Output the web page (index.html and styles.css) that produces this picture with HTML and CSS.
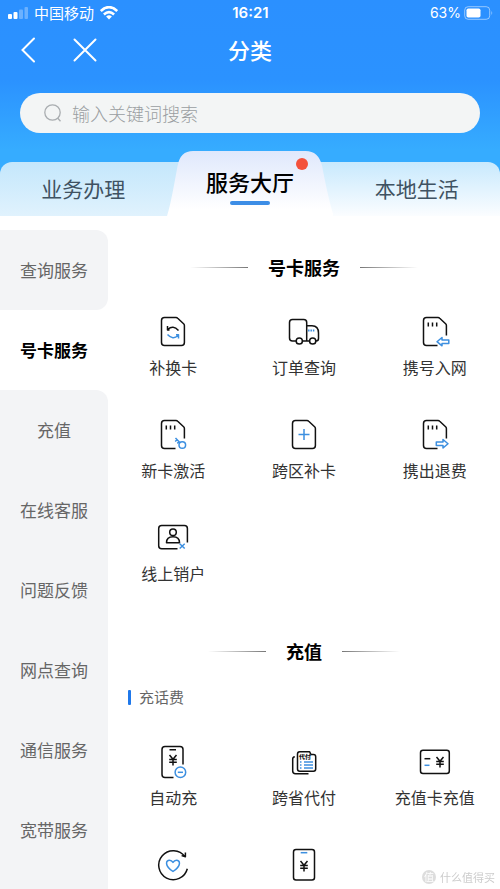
FILE: index.html
```html
<!DOCTYPE html>
<html lang="zh-CN">
<head>
<meta charset="utf-8">
<meta name="viewport" content="width=device-width, initial-scale=1">
<title>分类</title>
<link rel="stylesheet" href="styles.css">
</head>
<body>
<svg class="defs" aria-hidden="true">
  <defs>
    <symbol id="yen" viewBox="0 0 10 12"><path d="M1.5 1 5 5.200 8.500 1M5 5.200V11.500M1.200 5.400H8.800M1.200 8.300H8.800"/></symbol>
    <symbol id="sim-open" viewBox="0 0 36 36"><path d="M20.500 31.500H9.500Q6.500 31.500 6.500 28.500V6.500Q6.500 3.500 9.500 3.500H21Q22 3.500 22.700 4.200L28.600 9.800Q29.400 10.600 29.400 11.600V21.500"/><path d="M11.300 8.500V12.500M15.500 8.500V12.500M19.700 8.500V12.500"/></symbol>
    <symbol id="sim" viewBox="0 0 36 36"><path d="M9.500 3.500H21Q22 3.500 22.700 4.200L28.600 9.800Q29.400 10.600 29.400 11.600V28.500Q29.400 31.500 26.400 31.500H9.500Q6.500 31.500 6.500 28.500V6.500Q6.500 3.500 9.500 3.500Z"/></symbol>
  </defs>
</svg>

<header class="header">
  <div class="status">
    <div class="status-left">
      <svg width="20" height="12" viewBox="0 0 20 12" fill="#fff" aria-hidden="true"><rect y="7" width="4" height="5" rx="1"/><rect x="5.500" y="5" width="4" height="7" rx="1"/><rect x="11" y="2.500" width="4" height="9.500" rx="1" opacity=".3"/><rect x="16.500" width="3.500" height="12" rx="1" opacity=".3"/></svg>
      <span>中国移动</span>
      <svg width="18" height="14" viewBox="0 0 18 14" aria-hidden="true"><g fill="none" stroke="#fff" stroke-width="2.600"><path d="M.8 5Q9-2.700 17.200 5"/><path d="M3.900 8.500Q9 3.900 14.100 8.500"/></g><path d="M6.100 10.400Q9 8 11.900 10.400L9 13.600Z" fill="#fff"/></svg>
    </div>
    <time class="clock">16:21</time>
    <div class="status-right">
      <span>63%</span>
      <svg width="29" height="14" viewBox="0 0 29 14" aria-hidden="true"><rect x=".7" y=".7" width="25" height="12.600" rx="3.500" fill="none" stroke="#fff" opacity=".5"/><rect x="2.500" y="2.500" width="14" height="9" rx="1.800" fill="#fff"/><path d="M27.500 4.800Q29 7 27.500 9.200Z" fill="#fff" opacity=".6"/></svg>
    </div>
  </div>

  <div class="titlebar">
    <div class="nav">
      <button type="button" aria-label="返回"><svg width="16" height="26" viewBox="0 0 16 26"><path d="M14 1.500 2.500 13 14 24.500"/></svg></button>
      <button type="button" aria-label="关闭"><svg width="24" height="24" viewBox="0 0 24 24"><path d="M1.500 1.500 22.500 22.500M22.500 1.500 1.500 22.500"/></svg></button>
    </div>
    <h1>分类</h1>
  </div>

  <label class="search">
    <svg width="18" height="18" viewBox="0 0 18 18" fill="none" stroke="#a9adb0" stroke-width="1.300" aria-hidden="true"><circle cx="8.500" cy="8.500" r="7.700"/><path d="M13.800 14.200 16.500 17.200"/></svg>
    <input type="search" placeholder="输入关键词搜索" aria-label="搜索">
  </label>

  <nav class="tabs" aria-label="频道">
    <button type="button" class="tab tab-left">业务办理</button>
    <button type="button" class="tab tab-active" aria-current="page">
      <svg class="tab-shape" viewBox="0 0 166 65" preserveAspectRatio="none" aria-hidden="true"><defs><linearGradient id="tabfill" x1="0" y1="0" x2="0" y2="1"><stop offset="0" stop-color="#dfe8fc"/><stop offset=".9" stop-color="#fff"/></linearGradient></defs><path d="M0 65C4 52 7 34 10.500 15Q13 0 26 0H138Q151 0 154.500 15C158 34 162 52 166 65Z" fill="url(#tabfill)"/></svg>
      <span class="tab-text">服务大厅</span>
      <span class="dot"></span>
    </button>
    <button type="button" class="tab tab-right">本地生活</button>
  </nav>
</header>

<div class="content">
  <nav class="sidebar" aria-label="服务分类">
    <a href="#query" class="before">查询服务</a>
    <a href="#card" class="current" aria-current="true">号卡服务</a>
    <a href="#recharge" class="after">充值</a>
    <a href="#support">在线客服</a>
    <a href="#feedback">问题反馈</a>
    <a href="#outlets">网点查询</a>
    <a href="#telecom">通信服务</a>
    <a href="#broadband">宽带服务</a>
    <div class="rest"></div>
  </nav>

  <main>
    <section id="card">
      <h2>号卡服务</h2>
      <div class="grid">
        <a href="#"><svg class="icon" viewBox="0 0 36 36"><use href="#sim"/><path d="M12.500 12V16H14.500M12.800 15.500Q18 10.500 23.500 16.500"/><path class="blue" d="M12.500 20.500Q18 26.500 23 21.500M21 20.800H23.500V24.500"/></svg>补换卡</a>
        <a href="#"><svg class="icon" viewBox="0 0 36 36"><path d="M10 27H6.500Q3.500 27 3.500 24V8.500Q3.500 5.500 6.500 5.500H17.700Q20.700 5.500 20.700 8.500V27H16.500M20.700 11.700H26Q32.500 11.700 32.500 19V24.500Q32.500 27 30 27M20.700 27H23.500"/><circle cx="13.300" cy="27" r="3.100"/><circle cx="26.700" cy="27" r="3.100"/><path class="blue" d="M22.800 15.500V17.500M25.200 15.500V17.500M27.600 15.500V17.500"/></svg>订单查询</a>
        <a href="#"><svg class="icon" viewBox="0 0 36 36"><use href="#sim-open"/><path class="blue" d="M20 27.700 25 23.500V26H31.800V29.400H25V31.800Z"/></svg>携号入网</a>
        <a href="#"><svg class="icon" viewBox="0 0 36 36"><use href="#sim-open"/><g class="blue"><circle cx="27.300" cy="28" r="3.300"/><path d="M24.800 25.500 20.500 21M22 22.700 20.200 24.500M24 24.700 22.300 26.400"/></g></svg>新卡激活</a>
        <a href="#"><svg class="icon" viewBox="0 0 36 36"><use href="#sim"/><path class="blue" d="M18 12V23M12.500 17.500H23.500"/></svg>跨区补卡</a>
        <a href="#"><svg class="icon" viewBox="0 0 36 36"><use href="#sim-open"/><path class="blue" d="M31 26.700 26 22.500V25H19.300V28.400H26V31Z"/></svg>携出退费</a>
        <a href="#"><svg class="icon" viewBox="0 0 36 36"><path d="M22.500 28.700H6.700Q3.700 28.700 3.700 25.700V8.500Q3.700 5.500 6.700 5.500H29.400Q32.400 5.500 32.400 8.500V22.500"/><circle cx="18" cy="12.300" r="3.300"/><path d="M11.500 22.700Q11.500 16.800 18 16.800T24.500 22.700Z"/><path class="blue" d="M24.700 23.700 29.700 28.500M29.700 23.700 24.700 28.500"/></svg>线上销户</a>
      </div>
    </section>

    <section id="recharge">
      <h2>充值</h2>
      <h3>充话费</h3>
      <div class="grid">
        <a href="#"><svg class="icon" viewBox="0 0 36 36"><path d="M18.500 33.500H10Q7 33.500 7 30.500V5.500Q7 2.500 10 2.500H25Q28 2.500 28 5.500V20.500M14.500 5.800H21"/><use href="#yen" x="13" y="10" width="10" height="12"/><g class="blue"><circle cx="25.400" cy="28.300" r="5.300"/><path d="M22.800 28.300H28"/></g></svg>自动充</a>
        <a href="#"><svg class="icon" viewBox="0 0 36 36"><path d="M8.800 12.700Q6.700 13 6.700 15V27Q6.700 29.700 9.500 29.700H22.500M13.700 7.700H23.500L25 10.500H27.500Q29.700 10.500 29.700 12.700V25Q29.700 27.200 27.500 27.200H13.700Q11.500 27.200 11.500 25V10Q11.500 7.700 13.700 7.700Z"/><text class="tiny" x="13" y="15">代付</text><path class="blue" d="M14 18H15.500M18 18H27M14 21H15.500M18 21H27M14 24H15.500M18 24H27"/></svg>跨省代付</a>
        <a href="#"><svg class="icon" viewBox="0 0 36 36"><rect x="3.500" y="6.300" width="28.800" height="23.200" rx="2.500"/><path d="M7.500 14.700H13.300"/><path class="blue" d="M7.500 21.300H12.500"/><use href="#yen" x="18" y="12" width="10" height="12"/></svg>充值卡充值</a>
        <a href="#" aria-label="话费服务"><svg class="icon" viewBox="0 0 36 36"><path d="M32.300 21.700A14.500 14.500 0 1 1 30 9.700M30.400 5.500V9.700L26.600 8.600"/><path class="blue" d="M18 24.500C9 18.500 11 13.200 14.500 13.200Q16.700 13.200 18 15.400Q19.300 13.200 21.500 13.200C25 13.200 27 18.500 18 24.500Z"/></svg></a>
        <a href="#" aria-label="手机充值"><svg class="icon" viewBox="0 0 36 36"><rect x="7.500" y="2.500" width="21" height="30.500" rx="2.500"/><path class="blue" d="M14.700 5.700H21.300"/><use href="#yen" x="13" y="13" width="10" height="12"/></svg></a>
      </div>
    </section>
  </main>
</div>

<div class="watermark"><span class="seal">值</span><span>什么值得买</span></div>
</body>
</html>
```

FILE: styles.css
```css
* {
  box-sizing: border-box;
}

body {
  margin: 0;
  min-height: 100vh;
  display: flex;
  flex-direction: column;
  background: #fff;
  color: #333;
  font-family: "Noto Sans CJK SC", sans-serif;
}

a {
  color: inherit;
  text-decoration: none;
}

button {
  border: 0;
  padding: 0;
  background: none;
  font: inherit;
  color: inherit;
}

h1, h2, h3 {
  margin: 0;
}

.defs {
  position: absolute;
  width: 0;
  height: 0;
}

.header {
  background: linear-gradient(#2b90ff 0, #2b92ff 80px, #36acff 150px);
}

.status {
  display: grid;
  grid-template-columns: 1fr auto 1fr;
  align-items: center;
  height: 25px;
  padding: 0 7px 0 8px;
  color: #fff;
  font-size: 15px;
  line-height: 24px;
}

.status-left,
.status-right {
  display: flex;
  align-items: center;
  gap: 6px;
}

.status-right {
  justify-content: flex-end;
  gap: 3px;
  font-family: Inter, sans-serif;
  font-size: 14px;
}

.clock {
  font-family: Inter, sans-serif;
  font-size: 15px;
  font-weight: 600;
}

.titlebar {
  display: grid;
  grid-template-columns: 1fr auto 1fr;
  align-items: center;
  height: 50px;
  padding: 0 20px;
  color: #fff;
}

.titlebar h1 {
  padding-bottom: 2px;
  font-size: 22px;
  font-weight: 500;
  line-height: 32px;
}

.nav {
  display: flex;
  align-items: center;
  gap: 37px;
}

.nav button {
  display: flex;
}

.nav svg {
  fill: none;
  stroke: #fff;
  stroke-width: 2;
  stroke-linecap: round;
}

.search {
  display: flex;
  align-items: center;
  gap: 10px;
  height: 40px;
  margin: 18px 20px;
  padding: 0 24px;
  border-radius: 20px;
  background: #f3f5f5;
}

.search input {
  flex: 1;
  min-width: 0;
  padding: 0;
  border: 0;
  outline: 0;
  background: none;
  font: inherit;
  font-size: 18px;
  font-weight: 300;
}

.search input::placeholder {
  color: #9a9ea1;
  opacity: 1;
}

.tabs {
  display: grid;
  grid-template-columns: repeat(3, 1fr);
  height: 65px;
}

.tab {
  font-size: 21px;
  line-height: 32px;
  color: #3f5262;
}

.tab-left,
.tab-right {
  margin-top: 11px;
  padding-bottom: 2px;
}

.tab-left {
  margin-right: -16px;
  padding-right: 16px;
  border-radius: 12px 0 0 0;
  background: linear-gradient(#c4e7fc, #e0f2fd);
}

.tab-right {
  margin-left: -16px;
  padding-left: 16px;
  border-radius: 0 12px 0 0;
  background: linear-gradient(#c8e9fd, #fbfdff);
}

.tab-active {
  position: relative;
  z-index: 1;
  padding-bottom: 6px;
  color: #000;
  font-size: 22px;
  font-weight: 500;
}

.tab-shape {
  position: absolute;
  inset: 0;
  width: 100%;
  height: 100%;
}

.tab-text {
  position: relative;
}

.tab-text::after {
  content: "";
  position: absolute;
  left: 50%;
  bottom: -8px;
  width: 40px;
  height: 4px;
  margin-left: -20px;
  border-radius: 2px;
  background: #3c8de6;
}

.dot {
  position: absolute;
  top: 7px;
  right: 25px;
  width: 12px;
  height: 12px;
  border-radius: 50%;
  background: #f4513b;
}

.content {
  flex: 1;
  display: flex;
  padding-top: 14px;
}

.sidebar {
  flex: none;
  width: 108px;
  display: flex;
  flex-direction: column;
  font-size: 17px;
  line-height: 24px;
  color: #666;
}

.sidebar a {
  display: flex;
  align-items: center;
  justify-content: center;
  height: 80px;
  background: #f3f4f6;
}

.sidebar .before {
  border-radius: 0 12px 12px 0;
}

.sidebar .current {
  background: #fff;
  color: #000;
  font-weight: 700;
}

.sidebar .after {
  border-top-right-radius: 12px;
}

.rest {
  flex: 1;
  background: #f3f4f6;
}

main {
  flex: 1;
  min-width: 0;
  padding-top: 25px;
}

section + section {
  margin-top: 54px;
}

h2 {
  display: flex;
  align-items: center;
  justify-content: center;
  gap: 20px;
  color: #000;
  font-size: 18px;
  font-weight: 700;
  line-height: 24px;
}

h2::before,
h2::after {
  content: "";
  width: 58px;
  height: 1px;
  background: linear-gradient(90deg, transparent, #777);
}

h2::after {
  background: linear-gradient(270deg, transparent, #777);
}

h3 {
  display: flex;
  align-items: center;
  gap: 8px;
  margin: 22px 20px 0;
  color: #666;
  font-size: 15px;
  font-weight: 400;
  line-height: 24px;
}

h3::before {
  content: "";
  width: 3px;
  height: 15px;
  border-radius: 1px;
  background: #1f78ea;
}

.grid {
  display: grid;
  grid-template-columns: repeat(3, 1fr);
  row-gap: 38px;
  margin-top: 35px;
}

.grid a {
  display: flex;
  flex-direction: column;
  align-items: center;
  gap: 5px;
  font-size: 16px;
  line-height: 24px;
}

.icon {
  width: 36px;
  height: 36px;
  fill: none;
  stroke: #111;
  stroke-width: 1.5;
  stroke-linejoin: round;
}

.icon .blue {
  stroke: #3c8fe0;
}

.tiny {
  font-size: 6px;
  font-weight: 900;
  fill: #111;
  stroke: none;
}

.watermark {
  position: fixed;
  right: 5px;
  bottom: 4px;
  display: flex;
  align-items: center;
  gap: 4px;
  color: #ccc;
  font-size: 11px;
  line-height: 16px;
}

.seal {
  width: 14px;
  height: 14px;
  border-radius: 50%;
  background: #ddd;
  color: #fff;
  font-size: 10px;
  line-height: 14px;
  text-align: center;
}
```
